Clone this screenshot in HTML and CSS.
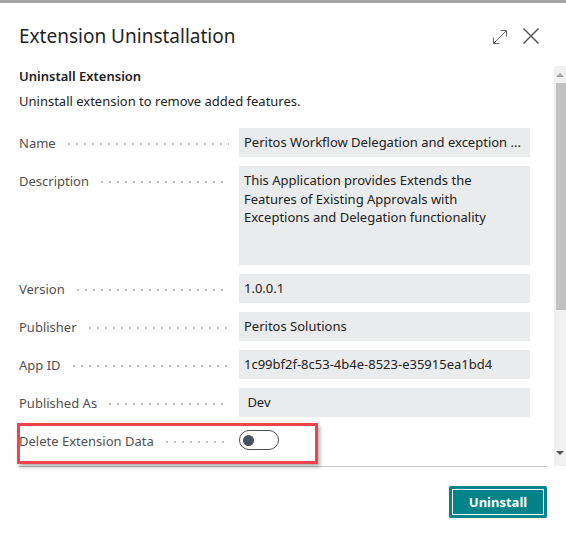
FILE: index.html
```html
<!DOCTYPE html>
<html>
<head>
<meta charset="utf-8">
<link rel="stylesheet" href="styles.css">
</head>
<body>
<div class="topbar"></div>
<div class="dialog">
  <header class="head">
    <h1 class="title">Extension Uninstallation</h1>
    <div class="tools">
      <svg class="ico-expand" width="16" height="16" viewBox="0 0 16 16"><path d="M1.5 14.5 L14.5 1.5 M8.5 1.5 H14.5 V7.5 M1.5 8.5 V14.5 H7.5" fill="none" stroke="#666" stroke-width="1"/></svg>
      <svg class="ico-close" width="18" height="18" viewBox="0 0 18 18"><path d="M1.5 1.5 L16.5 16.5 M16.5 1.5 L1.5 16.5" fill="none" stroke="#5a5a5a" stroke-width="1.5"/></svg>
    </div>
  </header>
  <div class="body">
    <div class="content">
      <h2 class="subtitle">Uninstall Extension</h2>
      <p class="intro">Uninstall extension to remove added features.</p>
      <div class="fields">
        <div class="label"><span>Name</span><i class="dots"></i></div>
        <div class="value">Peritos Workflow Delegation and exception ...</div>
        <div class="label"><span>Description</span><i class="dots"></i></div>
        <div class="value tall">This Application provides Extends the Features of Existing Approvals with Exceptions and Delegation functionality</div>
        <div class="label"><span>Version</span><i class="dots"></i></div>
        <div class="value">1.0.0.1</div>
        <div class="label"><span>Publisher</span><i class="dots"></i></div>
        <div class="value">Peritos Solutions</div>
        <div class="label"><span>App ID</span><i class="dots"></i></div>
        <div class="value">1c99bf2f-8c53-4b4e-8523-e35915ea1bd4</div>
        <div class="label"><span>Published As</span><i class="dots"></i></div>
        <div class="value">&nbsp;Dev</div>
        <div class="label toggle-label"><span>Delete Extension Data</span><i class="dots"></i></div>
        <div class="toggle-cell"><span class="toggle"><span class="knob"></span></span></div>
      </div>
    </div>
    <div class="scrollbar">
      <div class="sb-btn up"><span class="tri-up"></span></div>
      <div class="sb-thumb"></div>
      <div class="sb-track"></div>
      <div class="sb-btn down"><span class="tri-down"></span></div>
    </div>
  </div>
  <footer class="footer">
    <button class="btn">Uninstall</button>
  </footer>
  <div class="highlight"></div>
</div>
</body>
</html>
```
FILE: styles.css
```css
html, body {
  margin: 0;
  padding: 0;
  background: #fff;
}
body {
  font-family: "Noto Sans", "Open Sans", sans-serif;
  color: #212121;
  width: 566px;
  height: 538px;
  overflow: hidden;
}
.topbar {
  height: 3px;
  background: #a6a6a6;
}
.dialog {
  position: relative;
}
.head {
  box-sizing: border-box;
  height: 63px;
  padding: 3px 26px 0 19px;
  display: flex;
  align-items: center;
  justify-content: space-between;
}
.title {
  margin: 0;
  font-size: 19px;
  font-weight: 400;
  color: #1f1f1f;
  line-height: 26px;
}
.tools {
  display: flex;
  align-items: center;
  gap: 14px;
}
.ico-expand { display: block; margin-top: 1px; }
.ico-close { display: block; }
.body {
  height: 400px;
  display: flex;
}
.content {
  flex: 1;
  padding: 1px 0 0 19px;
}
.subtitle {
  margin: 0;
  font-size: 13px;
  font-weight: 600;
  line-height: 18px;
  color: #212121;
}
.intro {
  margin: 7px 0 0;
  font-size: 13px;
  line-height: 18px;
  color: #212121;
}
.fields {
  margin-top: 18px;
  display: grid;
  grid-template-columns: 220px 291px;
  row-gap: 9px;
  font-size: 13px;
}
.label {
  display: flex;
  align-items: flex-start;
  color: #505050;
  line-height: 18px;
  padding-top: 6px;
  padding-right: 10px;
}
.dots {
  flex: 1;
  height: 2px;
  margin: 9px 0 0 9px;
  background-image: radial-gradient(circle, #bdbdbd 0.9px, transparent 1.1px);
  background-size: 8px 2px;
}
.value {
  box-sizing: border-box;
  height: 29px;
  background: #eaebec;
  padding: 5px 6px 0 5px;
  line-height: 18px;
  color: #212121;
  white-space: nowrap;
  overflow: hidden;
}
.value.tall {
  height: 99px;
  white-space: normal;
  line-height: 18.5px;
  padding-top: 5px;
}
.toggle-label {
  margin-top: 4px;
  padding-top: 2px;
}
.toggle-cell {
  margin-top: 4px;
  height: 22px;
}
.toggle {
  box-sizing: border-box;
  display: flex;
  align-items: center;
  width: 40px;
  height: 20px;
  border: 1.5px solid #4b4f58;
  border-radius: 10px;
  padding-left: 3px;
}
.knob {
  width: 11px;
  height: 11px;
  border-radius: 50%;
  background: #4a5163;
}
.scrollbar {
  width: 12px;
  background: #f0f0f0;
  display: flex;
  flex-direction: column;
}
.sb-btn {
  height: 17px;
  display: flex;
  align-items: center;
  justify-content: center;
}
.sb-btn.down { height: 18px; align-items: flex-start; }
.tri-up {
  width: 0; height: 0;
  border-left: 4px solid transparent;
  border-right: 4px solid transparent;
  border-bottom: 4px solid #a3a3a3;
}
.tri-down {
  margin-top: 3px;
  width: 0; height: 0;
  border-left: 4px solid transparent;
  border-right: 4px solid transparent;
  border-top: 4px solid #505050;
}
.sb-thumb {
  height: 227px;
  margin-left: 2px;
  background: #c1c1c1;
}
.sb-track { flex: 1; }
.footer {
  margin: 0 19px;
  border-top: 1px solid #c8c8c8;
  padding-top: 19px;
  display: flex;
  justify-content: flex-end;
}
.btn {
  box-sizing: border-box;
  width: 98px;
  height: 32px;
  background: #008489;
  border: 2px solid #008489;
  outline: 1px solid #fff;
  outline-offset: -4px;
  border-radius: 2px;
  color: #fff;
  font-family: "Noto Sans", "Open Sans", sans-serif;
  font-size: 13px;
  font-weight: 700;
  padding: 0;
}
.highlight {
  position: absolute;
  left: 17px;
  top: 420px;
  width: 301px;
  height: 41px;
  box-sizing: border-box;
  border: 3px solid #f2434a;
  box-shadow: 2px 3px 4px rgba(0,0,0,0.3);
}
```
